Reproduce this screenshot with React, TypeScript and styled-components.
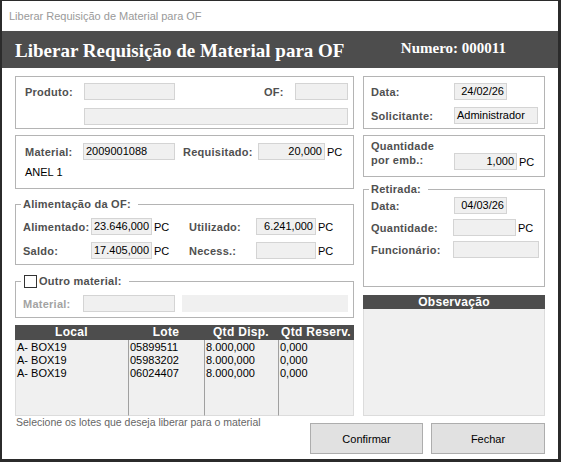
import React from "react"
import styled, { createGlobalStyle } from "styled-components"

const GlobalStyle = createGlobalStyle`
  html, body {
    margin: 0;
    padding: 0;
    background: #fff;
  }
  * {
    box-sizing: border-box;
  }
`

const DARK = "#4d4d4d"
const LINE = "#b4b4b4"
const FIELD_BG = "#f0f0f0"
const LABEL = "#505050"

const Window = styled.div`
  width: 561px;
  height: 462px;
  border-style: solid;
  border-color: #2b2b2b;
  border-width: 1px 3px 3px 2px;
  background: #fff;
  display: flex;
  flex-direction: column;
  font-family: "Liberation Sans", Arial, sans-serif;
  font-size: 11px;
  color: #000;
  overflow: hidden;
`

const TitleBar = styled.div`
  height: 30px;
  display: flex;
  align-items: center;
  padding-left: 7px;
  color: #9a9a9a;
  font-size: 11px;
`

const Header = styled.div`
  height: 37px;
  background: ${DARK};
  display: flex;
  align-items: center;
  justify-content: space-between;
  padding: 0 52px 0 13px;
  color: #fff;
  font-family: "Liberation Serif", "Times New Roman", serif;
  font-weight: bold;
`

const HeaderTitle = styled.div`
  font-size: 19px;
  margin-top: 2px;
`

const HeaderNumber = styled.div`
  font-size: 15px;
  margin-top: -3px;
`

const Body = styled.div`
  flex: 1;
  padding: 8px 13px 0;
  display: flex;
  flex-direction: column;
`

const Columns = styled.div`
  display: grid;
  grid-template-columns: 339px 182px;
  column-gap: 9px;
  height: 340px;
`

const Column = styled.div`
  display: flex;
  flex-direction: column;
  min-height: 0;
`

const Box = styled.div<{ $pad: string; $mt?: number }>`
  border: 1px solid ${LINE};
  padding: ${({ $pad }) => $pad};
  margin-top: ${({ $mt }) => $mt ?? 0}px;
`

const Group = styled.fieldset<{ $pad: string; $mt?: number }>`
  margin: ${({ $mt }) => $mt ?? 0}px 0 0;
  min-width: 0;
  border: 1px solid ${LINE};
  padding: ${({ $pad }) => $pad};
`

const Legend = styled.legend`
  display: flex;
  align-items: center;
  margin-left: -2px;
  padding: 0 7px 0 2px;
  height: 14px;
  font-size: 11px;
  font-weight: bold;
  letter-spacing: 0.25px;
  color: ${LABEL};
`

const Check = styled.span`
  width: 13px;
  height: 13px;
  border: 1px solid #333;
  background: #fff;
  margin: 0 2px 0 1px;
`

const Row = styled.div<{ $mt?: number; $align?: string }>`
  display: flex;
  align-items: ${({ $align }) => $align ?? "center"};
  margin-top: ${({ $mt }) => $mt ?? 0}px;
`

const Label = styled.span<{ $w?: number; $ml?: number; $muted?: boolean; $mb?: number }>`
  flex: none;
  width: ${({ $w }) => ($w ? `${$w}px` : "auto")};
  margin-left: ${({ $ml }) => $ml ?? 0}px;
  margin-bottom: ${({ $mb }) => $mb ?? 0}px;
  font-weight: bold;
  letter-spacing: 0.25px;
  line-height: 14px;
  color: ${({ $muted }) => ($muted ? "#a3a3a3" : LABEL)};
  white-space: nowrap;
`

const Field = styled.div<{ $w: number; $ml?: number; $right?: boolean; $bare?: boolean }>`
  flex: none;
  width: ${({ $w }) => $w}px;
  height: 17px;
  margin-left: ${({ $ml }) => $ml ?? 0}px;
  background: ${FIELD_BG};
  border: 1px solid ${({ $bare }) => ($bare ? FIELD_BG : "#d4d4d4")};
  padding: 0 2px;
  line-height: 15px;
  text-align: ${({ $right }) => ($right ? "right" : "left")};
  white-space: nowrap;
  overflow: hidden;
`

const Spacer = styled.div`
  flex: 1;
`

const Unit = styled.span`
  margin-left: 2px;
`

const Pair = styled.div<{ $w?: number }>`
  display: flex;
  align-items: center;
  width: ${({ $w }) => ($w ? `${$w}px` : "auto")};
`

const Text = styled.div`
  line-height: 13px;
`

const Table = styled.div`
  flex: 1;
  margin-top: 7px;
  display: grid;
  grid-template-columns: 113px 76px 74px 1fr;
  grid-template-rows: 15px 1fr;
  background: ${FIELD_BG};
`

const HeadCell = styled.div`
  background: ${DARK};
  color: #fff;
  font-weight: bold;
  font-size: 12px;
  letter-spacing: 0.3px;
  line-height: 15px;
  text-align: center;
  white-space: nowrap;
`

const BodyCol = styled.div<{ $first?: boolean; $last?: boolean }>`
  border-left: 1px solid ${({ $first }) => ($first ? "#dcdcdc" : "#a0a0a0")};
  border-right: ${({ $last }) => ($last ? "1px solid #dcdcdc" : "none")};
  border-bottom: 1px solid #dcdcdc;
  padding-top: 1px;
`

const Cell = styled.div`
  line-height: 13px;
  padding-left: 1px;
  white-space: nowrap;
`

const ObsHeader = styled.div`
  margin-top: 8px;
  height: 14px;
  background: ${DARK};
  color: #fff;
  font-weight: bold;
  font-size: 12px;
  letter-spacing: 0.3px;
  line-height: 14px;
  text-align: center;
`

const ObsArea = styled.div`
  flex: 1;
  background: ${FIELD_BG};
  border: 1px solid #dcdcdc;
  border-top: none;
`

const Footer = styled.div`
  display: flex;
  justify-content: space-between;
  align-items: flex-start;
`

const Hint = styled.div`
  margin-left: 1px;
  font-size: 10.5px;
  line-height: 13px;
  color: #666;
`

const Buttons = styled.div`
  display: flex;
  gap: 8px;
  margin-top: 7px;
`

const Button = styled.button<{ $w?: number }>`
  width: ${({ $w }) => $w ?? 113}px;
  height: 31px;
  background: #e1e1e1;
  border: 1px solid #adadad;
  font-family: "Liberation Sans", Arial, sans-serif;
  font-size: 11px;
  color: #000;
  padding: 0;
`

const lots = [
  { local: "A- BOX19", lote: "05899511", disp: "8.000,000", res: "0,000" },
  { local: "A- BOX19", lote: "05983202", disp: "8.000,000", res: "0,000" },
  { local: "A- BOX19", lote: "06024407", disp: "8.000,000", res: "0,000" },
]

const App: React.FC = () => (
  <>
    <GlobalStyle />
    <Window>
      <TitleBar>Liberar Requisição de Material para OF</TitleBar>
      <Header>
        <HeaderTitle>Liberar Requisição de Material para OF</HeaderTitle>
        <HeaderNumber>Numero: 000011</HeaderNumber>
      </Header>
      <Body>
        <Columns>
          <Column>
            <Box $pad="6px 5px 3px 9px">
              <Row>
                <Label $w={59}>Produto:</Label>
                <Field $w={91} />
                <Spacer />
                <Label $w={31}>OF:</Label>
                <Field $w={53} />
              </Row>
              <Row $mt={8}>
                <Field $w={264} $ml={59} />
              </Row>
            </Box>

            <Box $pad="7px 5px 9px 9px" $mt={6}>
              <Row>
                <Label $w={58}>Material:</Label>
                <Field $w={92}>2009001088</Field>
                <Label $w={75} $ml={8}>Requisitado:</Label>
                <Field $w={67} $right>20,000</Field>
                <Unit>PC</Unit>
              </Row>
              <Row $mt={6}>
                <Text>ANEL 1</Text>
              </Row>
            </Box>

            <Group $pad="7px 5px 5px 7px" $mt={8}>
              <Legend>Alimentação da OF:</Legend>
              <Row>
                <Pair $w={167}>
                  <Label $w={68}>Alimentado:</Label>
                  <Field $w={61} $right>23.646,000</Field>
                  <Unit>PC</Unit>
                </Pair>
                <Pair $w={160}>
                  <Label $w={67}>Utilizado:</Label>
                  <Field $w={60} $right>6.241,000</Field>
                  <Unit>PC</Unit>
                </Pair>
              </Row>
              <Row $mt={7}>
                <Pair $w={167}>
                  <Label $w={68}>Saldo:</Label>
                  <Field $w={61} $right>17.405,000</Field>
                  <Unit>PC</Unit>
                </Pair>
                <Pair $w={160}>
                  <Label $w={67}>Necess.:</Label>
                  <Field $w={60} $right />
                  <Unit>PC</Unit>
                </Pair>
              </Row>
            </Group>

            <Group $pad="7px 5px 5px 7px" $mt={9}>
              <Legend>
                <Check />
                Outro material:
              </Legend>
              <Row>
                <Label $w={60} $muted>
                  Material:
                </Label>
                <Field $w={92} />
                <Field $w={166} $ml={7} $bare />
              </Row>
            </Group>

            <Table>
              <HeadCell>Local</HeadCell>
              <HeadCell>Lote</HeadCell>
              <HeadCell>Qtd Disp.</HeadCell>
              <HeadCell>Qtd Reserv.</HeadCell>
              <BodyCol $first>
                {lots.map((l, i) => (
                  <Cell key={i}>{l.local}</Cell>
                ))}
              </BodyCol>
              <BodyCol>
                {lots.map((l, i) => (
                  <Cell key={i}>{l.lote}</Cell>
                ))}
              </BodyCol>
              <BodyCol>
                {lots.map((l, i) => (
                  <Cell key={i}>{l.disp}</Cell>
                ))}
              </BodyCol>
              <BodyCol $last>
                {lots.map((l, i) => (
                  <Cell key={i}>{l.res}</Cell>
                ))}
              </BodyCol>
            </Table>
          </Column>

          <Column>
            <Box $pad="6px 6px 4px 7px">
              <Row>
                <Label $w={83}>Data:</Label>
                <Field $w={53} $right>24/02/26</Field>
              </Row>
              <Row $mt={7}>
                <Label $w={83}>Solicitante:</Label>
                <Field $w={84}>Administrador</Field>
              </Row>
            </Box>

            <Box $pad="3px 6px 6px 7px" $mt={6}>
              <Row $align="flex-end">
                <Label $w={83} $mb={3}>
                  Quantidade
                  <br />
                  por emb.:
                </Label>
                <Pair>
                  <Field $w={63} $right>1,000</Field>
                  <Unit>PC</Unit>
                </Pair>
              </Row>
            </Box>

            <Group $pad="1px 6px 28px 7px" $mt={5}>
              <Legend>Retirada:</Legend>
              <Row>
                <Label $w={83}>Data:</Label>
                <Field $w={53} $right>04/03/26</Field>
              </Row>
              <Row $mt={5}>
                <Label $w={82}>Quantidade:</Label>
                <Field $w={63} />
                <Unit>PC</Unit>
              </Row>
              <Row $mt={5}>
                <Label $w={82}>Funcionário:</Label>
                <Field $w={86} />
              </Row>
            </Group>

            <ObsHeader>Observação</ObsHeader>
            <ObsArea />
          </Column>
        </Columns>

        <Footer>
          <Hint>Selecione os lotes que deseja liberar para o material</Hint>
          <Buttons>
            <Button>Confirmar</Button>
            <Button $w={114}>Fechar</Button>
          </Buttons>
        </Footer>
      </Body>
    </Window>
  </>
)

export default App
